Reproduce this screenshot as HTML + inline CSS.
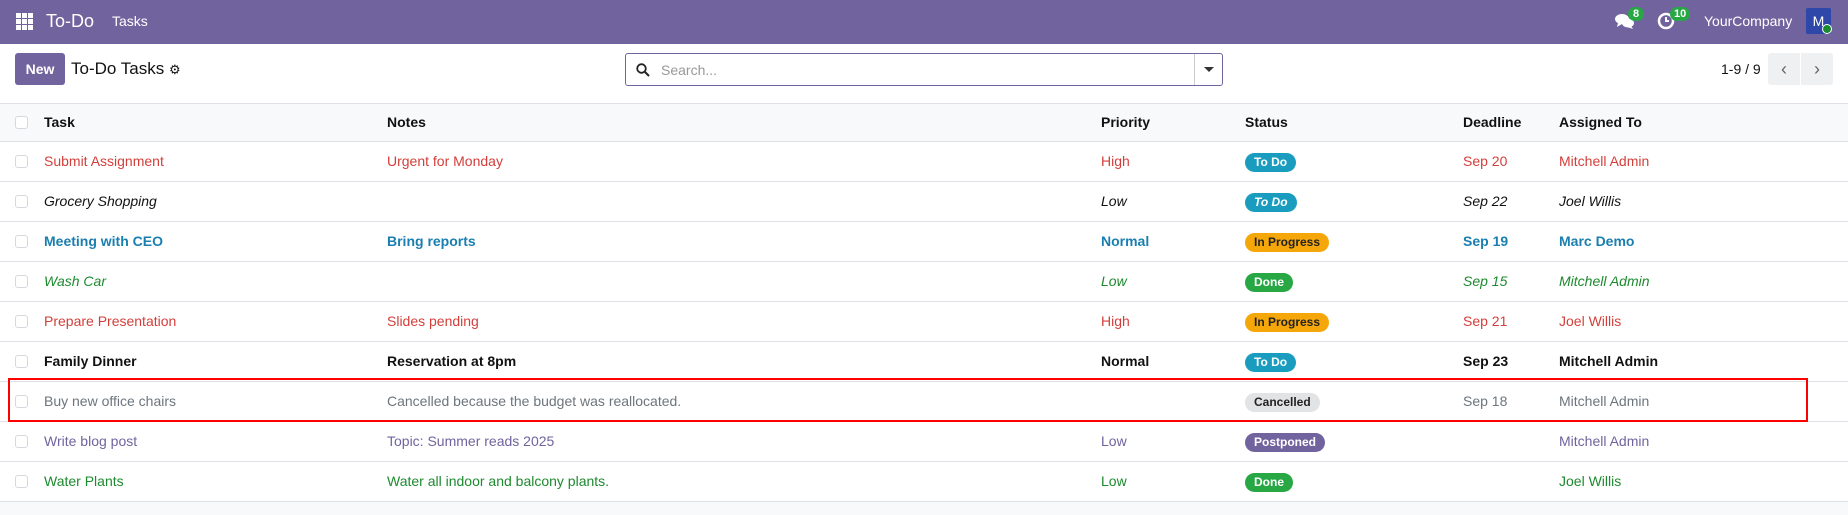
<!DOCTYPE html>
<html><head><meta charset="utf-8"><style>
*{box-sizing:border-box;margin:0;padding:0}
body{width:1848px;height:515px;overflow:hidden;background:#fff;font-family:"Liberation Sans",sans-serif;font-size:14px;color:#111;position:relative}
.nav{position:absolute;left:0;top:0;width:1848px;height:44px;background:#71639e;color:#fff}
.nav span{position:absolute}
.cp{position:absolute;top:53px}
.hdr{position:absolute;left:0;top:103px;width:1848px;height:39px;background:#f8f9fa;border-top:1px solid #dee2e6;border-bottom:1px solid #dee2e6;font-weight:bold}
.row{position:absolute;left:0;width:1848px;height:40px;border-bottom:1px solid #dee2e6}
.c{position:absolute;top:0;line-height:39px;white-space:nowrap}
.cb{position:absolute;left:15px;top:13px;width:13px;height:13px;border:1px solid #d5d8dc;border-radius:3px;background:#fff}
.b{display:inline-block;height:19px;line-height:19px;padding:0 9px;border-radius:10px;font-size:12px;font-weight:bold;vertical-align:middle;font-style:normal}
</style></head><body>
<div class="nav">
 <svg style="position:absolute;left:16px;top:13px" width="17" height="17" viewBox="0 0 17 17" fill="#fff"><rect x="0" y="0" width="5" height="5"/><rect x="6" y="0" width="5" height="5"/><rect x="12" y="0" width="5" height="5"/><rect x="0" y="6" width="5" height="5"/><rect x="6" y="6" width="5" height="5"/><rect x="12" y="6" width="5" height="5"/><rect x="0" y="12" width="5" height="5"/><rect x="6" y="12" width="5" height="5"/><rect x="12" y="12" width="5" height="5"/></svg>
 <span style="left:46px;top:11px;font-size:18px">To-Do</span>
 <span style="left:112px;top:13px;font-size:14px">Tasks</span>
 <svg style="position:absolute;left:1615px;top:13px" width="20" height="17" viewBox="0 0 20 17" fill="#fff"><ellipse cx="7" cy="6" rx="7" ry="5"/><path d="M3 10 L2 14 L7 11Z"/><ellipse cx="13" cy="10" rx="6" ry="4.5"/><path d="M16 13 L18 16 L12 14Z"/></svg>
 <span style="left:1628px;top:7px;background:#28a745;border-radius:9px;font-size:11px;font-weight:bold;padding:1px 5px">8</span>
 <svg style="position:absolute;left:1657px;top:12px" width="18" height="18" viewBox="0 0 18 18"><circle cx="9" cy="9" r="7" fill="none" stroke="#fff" stroke-width="2.5"/><path d="M9 5 V9 H12" stroke="#fff" stroke-width="2" fill="none"/></svg>
 <span style="left:1670px;top:7px;background:#28a745;border-radius:9px;font-size:11px;font-weight:bold;padding:1px 4px">10</span>
 <span style="left:1704px;top:13px;font-size:14px">YourCompany</span>
 <span style="left:1806px;top:8px;width:25px;height:26px;background:#2f47a8;border-radius:2px;font-size:14px;line-height:26px;text-align:center">M</span>
 <span style="left:1822px;top:24px;width:10px;height:10px;background:#1d8a2e;border-radius:50%;border:1px solid #fff"></span>
</div>
<div class="cp" style="left:15px;width:50px;height:32px;background:#71639e;color:#fff;border-radius:3px;font-weight:bold;line-height:32px;text-align:center">New</div>
<div class="cp" style="left:71px;line-height:32px;font-size:17px">To-Do Tasks <span style="font-size:13px">&#9881;</span></div>
<div class="cp" style="left:625px;width:598px;height:33px;border:1px solid #71639e;border-radius:3px">
 <svg style="position:absolute;left:10px;top:9px" width="14" height="14" viewBox="0 0 14 14"><circle cx="5.5" cy="5.5" r="4.3" fill="none" stroke="#222" stroke-width="1.8"/><path d="M9 9 L13 13" stroke="#222" stroke-width="2"/></svg>
 <span style="position:absolute;left:35px;top:8px;color:#999">Search...</span>
 <div style="position:absolute;right:0;top:0;width:28px;height:31px;border-left:1px solid #ccc"><div style="position:absolute;left:9px;top:13px;border-left:5px solid transparent;border-right:5px solid transparent;border-top:5px solid #333"></div></div>
</div>
<div class="cp" style="left:1721px;line-height:32px">1-9 / 9</div>
<div class="cp" style="left:1768px;width:32px;height:32px;background:#eef0f2;border-radius:3px 0 0 3px;text-align:center;line-height:32px;color:#666;font-size:18px">&#8249;</div>
<div class="cp" style="left:1801px;width:32px;height:32px;background:#eef0f2;border-radius:0 3px 3px 0;text-align:center;line-height:32px;color:#666;font-size:18px">&#8250;</div>

<div class="hdr"><div class="cb" style="top:12px"></div>
 <div class="c" style="left:44px;line-height:37px">Task</div><div class="c" style="left:387px;line-height:37px">Notes</div><div class="c" style="left:1101px;line-height:37px">Priority</div><div class="c" style="left:1245px;line-height:37px">Status</div><div class="c" style="left:1463px;line-height:37px">Deadline</div><div class="c" style="left:1559px;line-height:37px">Assigned To</div></div>

<div class="row" style="top:142px;color:#d23f3a"><div class="cb"></div><div class="c" style="left:44px">Submit Assignment</div><div class="c" style="left:387px">Urgent for Monday</div><div class="c" style="left:1101px">High</div><div class="c" style="left:1245px"><span class="b" style="background:#1a9cbf;color:#fff">To Do</span></div><div class="c" style="left:1463px">Sep 20</div><div class="c" style="left:1559px">Mitchell Admin</div></div>
<div class="row" style="top:182px;font-style:italic"><div class="cb"></div><div class="c" style="left:44px">Grocery Shopping</div><div class="c" style="left:1101px">Low</div><div class="c" style="left:1245px"><span class="b" style="background:#1a9cbf;color:#fff;font-style:italic">To Do</span></div><div class="c" style="left:1463px">Sep 22</div><div class="c" style="left:1559px">Joel Willis</div></div>
<div class="row" style="top:222px;color:#1a7fb0;font-weight:bold"><div class="cb"></div><div class="c" style="left:44px">Meeting with CEO</div><div class="c" style="left:387px">Bring reports</div><div class="c" style="left:1101px">Normal</div><div class="c" style="left:1245px"><span class="b" style="background:#f5a70a;color:#222">In Progress</span></div><div class="c" style="left:1463px">Sep 19</div><div class="c" style="left:1559px">Marc Demo</div></div>
<div class="row" style="top:262px;color:#1d8a2e;font-style:italic"><div class="cb"></div><div class="c" style="left:44px">Wash Car</div><div class="c" style="left:1101px">Low</div><div class="c" style="left:1245px"><span class="b" style="background:#28a745;color:#fff">Done</span></div><div class="c" style="left:1463px">Sep 15</div><div class="c" style="left:1559px">Mitchell Admin</div></div>
<div class="row" style="top:302px;color:#d23f3a"><div class="cb"></div><div class="c" style="left:44px">Prepare Presentation</div><div class="c" style="left:387px">Slides pending</div><div class="c" style="left:1101px">High</div><div class="c" style="left:1245px"><span class="b" style="background:#f5a70a;color:#222">In Progress</span></div><div class="c" style="left:1463px">Sep 21</div><div class="c" style="left:1559px">Joel Willis</div></div>
<div class="row" style="top:342px;font-weight:bold"><div class="cb"></div><div class="c" style="left:44px">Family Dinner</div><div class="c" style="left:387px">Reservation at 8pm</div><div class="c" style="left:1101px">Normal</div><div class="c" style="left:1245px"><span class="b" style="background:#1a9cbf;color:#fff">To Do</span></div><div class="c" style="left:1463px">Sep 23</div><div class="c" style="left:1559px">Mitchell Admin</div></div>
<div class="row" style="top:382px;color:#6c757d"><div class="cb"></div><div class="c" style="left:44px">Buy new office chairs</div><div class="c" style="left:387px">Cancelled because the budget was reallocated.</div><div class="c" style="left:1245px"><span class="b" style="background:#e2e3e5;color:#222">Cancelled</span></div><div class="c" style="left:1463px">Sep 18</div><div class="c" style="left:1559px">Mitchell Admin</div></div>
<div class="row" style="top:422px;color:#71639e"><div class="cb"></div><div class="c" style="left:44px">Write blog post</div><div class="c" style="left:387px">Topic: Summer reads 2025</div><div class="c" style="left:1101px">Low</div><div class="c" style="left:1245px"><span class="b" style="background:#71639e;color:#fff">Postponed</span></div><div class="c" style="left:1559px">Mitchell Admin</div></div>
<div class="row" style="top:462px;color:#1d8a2e"><div class="cb"></div><div class="c" style="left:44px">Water Plants</div><div class="c" style="left:387px">Water all indoor and balcony plants.</div><div class="c" style="left:1101px">Low</div><div class="c" style="left:1245px"><span class="b" style="background:#28a745;color:#fff">Done</span></div><div class="c" style="left:1559px">Joel Willis</div></div>
<div style="position:absolute;left:0;top:502px;width:1848px;height:13px;background:#f8f9fa"></div>
<div style="position:absolute;left:8px;top:378px;width:1800px;height:44px;border:2.5px solid #f00"></div>
</body></html>
